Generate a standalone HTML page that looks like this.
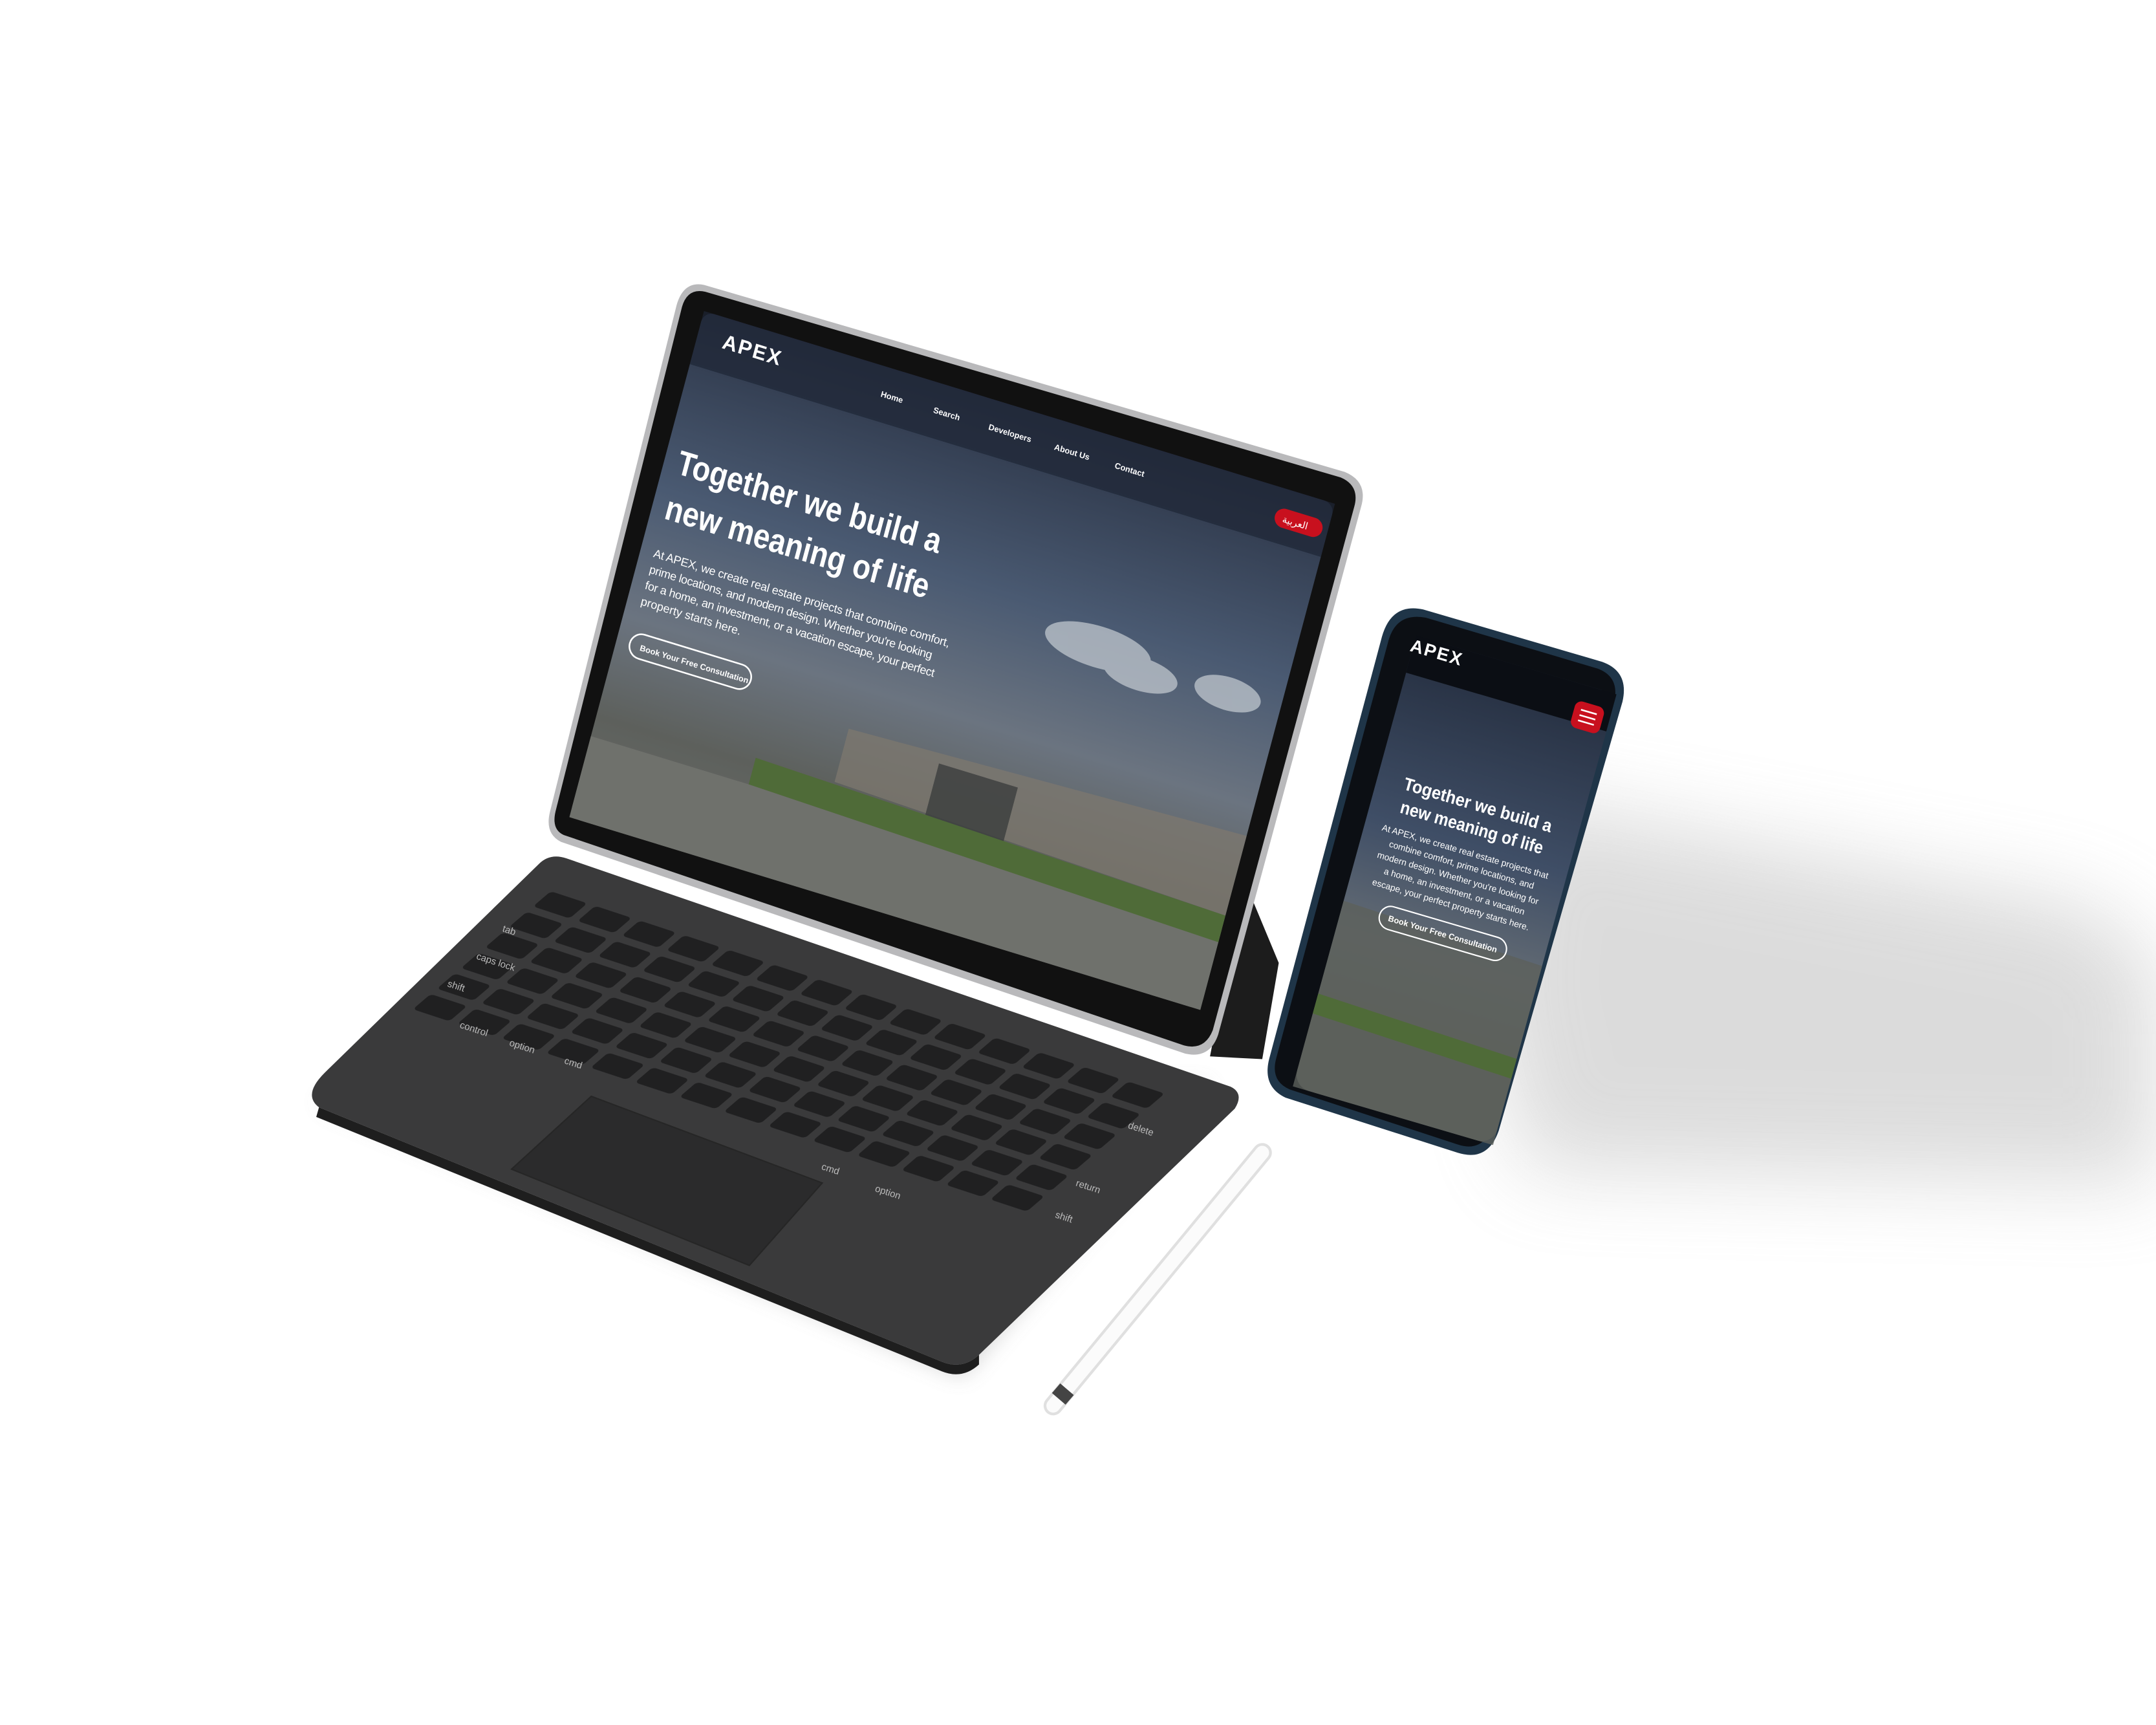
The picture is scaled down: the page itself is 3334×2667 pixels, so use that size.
<!DOCTYPE html>
<html><head><meta charset="utf-8"><style>html,body{margin:0;padding:0;background:#fff}svg{display:block}text{font-family:"Liberation Sans",sans-serif}</style></head>
<body>
<svg width="3334" height="2667" viewBox="0 0 1568 1254" xmlns="http://www.w3.org/2000/svg">
<defs>
<filter id="bl" x="-50%" y="-50%" width="200%" height="200%"><feGaussianBlur stdDeviation="30"/></filter>
<filter id="bl2" x="-50%" y="-50%" width="200%" height="200%"><feGaussianBlur stdDeviation="8"/></filter>
<linearGradient id="sky" x1="0" y1="0" x2="0" y2="1">
<stop offset="0" stop-color="#2c3547"/><stop offset="0.35" stop-color="#4a5a72"/><stop offset="0.6" stop-color="#6b7480"/><stop offset="0.8" stop-color="#5d605c"/><stop offset="1" stop-color="#6a6d6a"/></linearGradient>
<linearGradient id="sky2" x1="0" y1="0" x2="0" y2="1">
<stop offset="0" stop-color="#242d3e"/><stop offset="0.4" stop-color="#3f4e66"/><stop offset="0.65" stop-color="#646c74"/><stop offset="0.85" stop-color="#5c625a"/><stop offset="1" stop-color="#5a5e5c"/></linearGradient>
<pattern id="keys" width="34" height="23" patternUnits="userSpaceOnUse"><rect x="3" y="3" width="28" height="17" rx="3" fill="#202021"/></pattern>
</defs>
<rect width="1568" height="1254" fill="#fff"/>
<!-- phone shadow -->
<polygon points="1100,580 1520,660 1568,700 1568,860 1110,850 1080,720" fill="#a8a8a8" opacity="0.4" filter="url(#bl)"/>
<!-- keyboard shadow -->
<polygon points="230,800 700,1000 880,790" fill="#888" opacity="0.4" filter="url(#bl2)"/>
<!-- keyboard base -->
<path d="M236,780 L392,628 Q400,620 412,624 L895,790 Q905,795 898,806 L712,985 Q700,996 685,990 L232,805 Q220,796 236,780 Z" fill="#3a3a3b"/>
<path d="M232,805 L685,990 Q700,996 712,985 L712,992 Q700,1003 685,997 L230,812 Z" fill="#1e1e1e"/>
<!-- keys -->
<g transform="matrix(0.95,0.313,-0.76,0.65,400,645)">
<rect x="0" y="0" width="476" height="140" fill="url(#keys)"/>
</g>
<!-- trackpad -->
<polygon points="372,850 430,797 598,860 545,920" fill="#2b2b2c" stroke="#262626"/>
<g fill="#bbb" font-size="7">
<text x="365" y="677" transform="rotate(18 365 677)">tab</text>
<text x="346" y="697" transform="rotate(18 346 697)">caps lock</text>
<text x="325" y="717" transform="rotate(18 325 717)">shift</text>
<text x="334" y="747" transform="rotate(18 334 747)">control</text>
<text x="370" y="760" transform="rotate(18 370 760)">option</text>
<text x="410" y="773" transform="rotate(18 410 773)">cmd</text>
<text x="820" y="820" transform="rotate(18 820 820)">delete</text>
<text x="782" y="862" transform="rotate(18 782 862)">return</text>
<text x="767" y="885" transform="rotate(18 767 885)">shift</text>
<text x="597" y="850" transform="rotate(18 597 850)">cmd</text>
<text x="636" y="866" transform="rotate(18 636 866)">option</text>
</g>
<!-- hinge/stand -->
<polygon points="905,640 930,700 918,770 880,768" fill="#1c1c1c"/>
<!-- tablet -->
<path d="M512,207 L978,343 Q995,350 990,368 L886,752 Q880,770 862,766 L408,612 Q396,606 400,590 L492,222 Q497,204 512,207 Z" fill="#b9b9bb"/>
<path d="M513,212 L975,347 Q989,353 985,368 L882,749 Q876,764 861,760 L410,607 Q401,603 404,590 L496,223 Q500,209 513,212 Z" fill="#111"/>
<g transform="matrix(0.956,0.292,-0.257,0.966,512,226)">
<rect x="0" y="0" width="480" height="381" rx="8" fill="url(#sky)"/>
<rect x="0" y="0" width="480" height="40" fill="#1e2535" opacity="0.7"/>
<g fill="#c8ced4" opacity="0.7"><ellipse cx="340" cy="150" rx="40" ry="15"/><ellipse cx="375" cy="160" rx="28" ry="12"/><ellipse cx="440" cy="155" rx="25" ry="12"/></g>
<polygon points="180,260 480,250 480,310 180,300" fill="#7d786f" opacity="0.75"/>
<rect x="250" y="265" width="60" height="60" fill="#3b3d3d" opacity="0.8"/>
<polygon points="0,320 480,320 480,381 0,381" fill="#6f716c"/>
<polygon points="120,300 480,310 480,330 120,320" fill="#4f6b38"/>
<text x="19" y="22" font-size="15" font-weight="bold" fill="#fff" letter-spacing="1">APEX</text>
<g font-size="6" font-weight="bold" fill="#fff"><text x="140" y="22">Home</text><text x="180" y="22">Search</text><text x="222" y="22">Developers</text><text x="272" y="22">About Us</text><text x="318" y="22">Contact</text></g>
<rect x="440" y="14" width="36" height="14" rx="7" fill="#c8101e"/>
<text x="446" y="24" font-size="7" fill="#fff" font-family="Liberation Sans,DejaVu Sans,sans-serif">العربية</text>
<text x="10" y="119" font-size="25" font-weight="bold" fill="#fff" textLength="200" lengthAdjust="spacingAndGlyphs">Together we build a</text>
<text x="10" y="153" font-size="25" font-weight="bold" fill="#fff" textLength="200" lengthAdjust="spacingAndGlyphs">new meaning of life</text>
<g font-size="8.5" fill="#fff" lengthAdjust="spacingAndGlyphs"><text x="10" y="182" textLength="225">At APEX, we create real estate projects that combine comfort,</text><text x="10" y="194" textLength="215">prime locations, and modern design. Whether you're looking</text><text x="10" y="206" textLength="220">for a home, an investment, or a vacation escape, your perfect</text><text x="10" y="218">property starts here.</text></g>
<rect x="10" y="238" width="92" height="18" rx="9" fill="none" stroke="#fff" stroke-width="1.2"/>
<text x="18" y="250" font-size="6" font-weight="bold" fill="#fff">Book Your Free Consultation</text>
</g>
<!-- pencil -->
<line x1="918" y1="838" x2="766" y2="1022" stroke="#e0e0e0" stroke-width="14" stroke-linecap="round"/>
<line x1="918" y1="838" x2="766" y2="1022" stroke="#fbfbfb" stroke-width="10" stroke-linecap="round"/>
<line x1="776" y1="1010" x2="770" y2="1017" stroke="#444" stroke-width="13"/>
<!-- phone -->
<path d="M1035,443 L1165,481 Q1185,488 1180,510 L1090,822 Q1082,845 1060,838 L935,798 Q918,790 923,770 L1005,463 Q1012,438 1035,443 Z" fill="#1f3548"/>
<path d="M1037,449 L1162,486 Q1178,492 1174,510 L1085,820 Q1078,838 1060,832 L938,792 Q924,786 928,770 L1010,465 Q1016,445 1037,449 Z" fill="#0c0f14"/>
<g transform="matrix(0.958,0.281,-0.264,0.964,1030,462)">
<rect x="0" y="0" width="152" height="340" rx="12" fill="url(#sky2)"/>
<rect x="0" y="0" width="152" height="28" fill="#0b0e14"/>
<polygon points="0,200 152,205 152,340 0,340" fill="#5d605b" opacity="0.8"/>
<polygon points="0,270 152,275 152,290 0,285" fill="#4f6b38"/>
<text x="-2" y="12" font-size="13" font-weight="bold" fill="#fff" letter-spacing="1">APEX</text>
<rect x="125" y="12" width="22" height="20" rx="5" fill="#c8101e"/>
<g stroke="#fff" stroke-width="1.2"><line x1="130" y1="18" x2="142" y2="18"/><line x1="130" y1="22" x2="142" y2="22"/><line x1="130" y1="26" x2="142" y2="26"/></g>
<g font-weight="bold" fill="#fff" font-size="13" text-anchor="middle"><text x="76" y="110" textLength="112" lengthAdjust="spacingAndGlyphs">Together we build a</text><text x="76" y="127" textLength="108" lengthAdjust="spacingAndGlyphs">new meaning of life</text></g>
<g fill="#fff" font-size="6.5" text-anchor="middle"><text x="76" y="143">At APEX, we create real estate projects that</text><text x="76" y="153">combine comfort, prime locations, and</text><text x="76" y="163">modern design. Whether you're looking for</text><text x="76" y="173">a home, an investment, or a vacation</text><text x="76" y="183">escape, your perfect property starts here.</text></g>
<rect x="28" y="194" width="96" height="17" rx="8.5" fill="none" stroke="#fff" stroke-width="1"/>
<text x="76" y="205" font-size="6" font-weight="bold" fill="#fff" text-anchor="middle">Book Your Free Consultation</text>
</g>
</svg>
</body></html>
